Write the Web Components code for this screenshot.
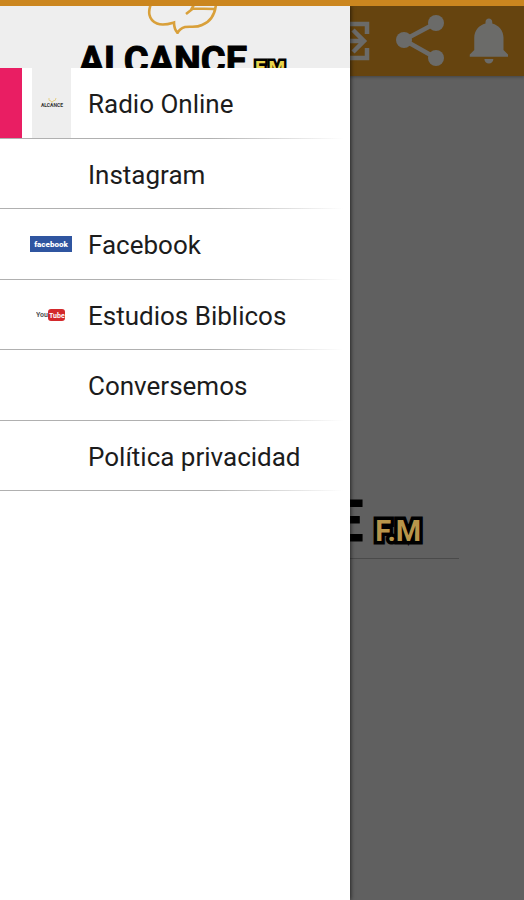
<!DOCTYPE html>
<html lang="es">
<head>
  <meta charset="utf-8">
  <meta name="viewport" content="width=device-width, initial-scale=1">
  <title>Alcance F.M</title>
  <style>
    body {
      margin: 0;
      font-family: Roboto, "Noto Sans", sans-serif;
    }
  </style>
</head>
<body>
  <radio-shell>
    <main-screen slot="screen"></main-screen>
    <side-drawer slot="drawer">
      <drawer-item icon="radio" active>Radio Online</drawer-item>
      <drawer-item>Instagram</drawer-item>
      <drawer-item icon="facebook">Facebook</drawer-item>
      <drawer-item icon="youtube">Estudios Biblicos</drawer-item>
      <drawer-item>Conversemos</drawer-item>
      <drawer-item>Política privacidad</drawer-item>
    </side-drawer>
  </radio-shell>

  <script>
    // Logo: globo de diálogo + nombre de la radio
    class BrandLogo extends HTMLElement {
      constructor() {
        super();
        this.attachShadow({ mode: "open" });
        this.render();
      }
      render() {
        this.shadowRoot.innerHTML = `
          <style>
            :host {
              align-items: center;
              color: #000;
              display: flex;
              flex: none;
              flex-direction: column;
              font-size: 38px;
              font-weight: 700;
              line-height: 54px;
            }
            :host([large]) {
              font-size: 57px;
              line-height: 73px;
            }
            svg {
              display: block;
              fill: none;
              height: 48px;
              stroke: var(--bubble, #d9a03a);
              stroke-width: 2.6;
              width: 72px;
            }
            :host([large]) svg {
              height: 68px;
              width: 102px;
            }
            .name {
              -webkit-text-stroke: 1px #000;
              align-items: baseline;
              display: flex;
              gap: 8px;
            }
            :host([large]) .name {
              gap: 12px;
            }
            .fm {
              -webkit-text-stroke: 5px #000;
              color: var(--gold, #e8d44c);
              font-size: 19px;
              line-height: 24px;
              paint-order: stroke fill;
              stroke-linejoin: round;
            }
            :host([large]) .fm {
              -webkit-text-stroke-width: 7px;
              font-size: 29px;
              line-height: 32px;
            }
          </style>
          <svg viewBox="0 0 72 48" aria-hidden="true">
            <path d="M5 18C2 25 2 34 11 37.500C17 40 23 38 28 36.500C28 41 29 44 31.500 47C33 44 35 42 39 41C45 40 50 42 56 39C64 36 69 29 70 18C70 7 58 2 46 4C30-1 6 4 5 18Z"/>
            <path d="M40 28L47 22.500L69 23M45 24L50 15"/>
          </svg>
          <div class="name"><span>ALCANCE</span><span class="fm">F.M</span></div>
        `;
      }
    }
    customElements.define("brand-logo", BrandLogo);

    // Barra superior con las acciones
    class TopBar extends HTMLElement {
      constructor() {
        super();
        this.attachShadow({ mode: "open" });
        this.render();
      }
      render() {
        this.shadowRoot.innerHTML = `
          <style>
            :host {
              align-items: center;
              background: #66440f;
              box-shadow: 0 1px 3px rgba(0, 0, 0, .3);
              display: flex;
              gap: 12px;
              height: 70px;
              justify-content: flex-end;
              padding-right: 7px;
            }
            button {
              background: none;
              border: 0;
              color: #6b6b69;
              padding: 0;
            }
            svg {
              display: block;
              fill: currentColor;
            }
          </style>
          <button type="button" aria-label="Salir">
            <svg width="52" height="52" viewBox="0 0 52 52">
              <path d="M5 19V9H42V19M5 33V43H42V33M12 26H38M28 15L39 26L28 37" fill="none" stroke="currentColor" stroke-width="4.500"/>
            </svg>
          </button>
          <button type="button" aria-label="Compartir">
            <svg width="62" height="62" viewBox="0 0 62 62">
              <path d="M47 13L15 30L47 48" fill="none" stroke="currentColor" stroke-width="4.500"/>
              <circle cx="15" cy="30" r="8"/>
              <circle cx="47" cy="13" r="8"/>
              <circle cx="47" cy="48" r="8"/>
            </svg>
          </button>
          <button type="button" aria-label="Notificaciones">
            <svg width="54" height="54" viewBox="0 0 24 24">
              <path d="M11.500 22c1.100 0 2-.9 2-2h-4c0 1.100.9 2 2 2zm6.500-6v-5.500c0-3.070-2.130-5.640-5-6.320V3.500c0-.83-.67-1.500-1.500-1.500S10 2.670 10 3.500v.68c-2.870.68-5 3.250-5 6.320V16l-2 2v1h17v-1l-2-2z"/>
            </svg>
          </button>
        `;
      }
    }
    customElements.define("top-bar", TopBar);

    // Pantalla principal, oscurecida mientras el menú está abierto
    class MainScreen extends HTMLElement {
      constructor() {
        super();
        this.attachShadow({ mode: "open" });
        this.render();
      }
      render() {
        this.shadowRoot.innerHTML = `
          <style>
            :host {
              --bubble: #6d521f;
              --gold: #b8954a;
              background: #606060;
              display: flex;
              flex-direction: column;
            }
            main {
              align-items: center;
              display: flex;
              flex: 1;
              flex-direction: column;
              justify-content: center;
            }
            .cover {
              border-bottom: 1px solid #4a4a4a;
              box-sizing: border-box;
              display: flex;
              justify-content: center;
              padding-left: 8px;
              width: 75%;
            }
          </style>
          <top-bar></top-bar>
          <main>
            <div class="cover"><brand-logo large></brand-logo></div>
          </main>
        `;
      }
    }
    customElements.define("main-screen", MainScreen);

    const ICONS = {
      radio: `
        <svg width="39" height="70" viewBox="0 0 39 70">
          <rect width="39" height="70" fill="#eee"/>
          <path d="M17 30q-1 3 2 3l1 1.500 1-1.500q3 0 3-3" fill="none" stroke="#e5cf85"/>
          <text x="20" y="39" text-anchor="middle" font-size="5" font-weight="700" fill="#333">ALCANCE</text>
        </svg>`,
      facebook: `
        <svg width="42" height="16" viewBox="0 0 42 16">
          <rect width="42" height="16" fill="#2f55a0"/>
          <text x="21" y="11" text-anchor="middle" font-size="8" font-weight="900" fill="#fff">facebook</text>
        </svg>`,
      youtube: `
        <svg width="30" height="14" viewBox="0 0 30 14">
          <rect x="12" y="1" width="17" height="12" rx="3" fill="#d3292c"/>
          <text x="0" y="9" font-size="7" font-weight="700" fill="#555">You</text>
          <text x="13" y="10" font-size="7" font-weight="700" fill="#fff">Tube</text>
        </svg>`
    };

    // Opción del menú lateral
    class DrawerItem extends HTMLElement {
      constructor() {
        super();
        this.attachShadow({ mode: "open" });
      }
      connectedCallback() {
        this.render();
      }
      render() {
        const icon = ICONS[this.getAttribute("icon")] || "";
        this.shadowRoot.innerHTML = `
          <style>
            :host {
              display: block;
            }
            a {
              align-items: center;
              box-sizing: border-box;
              color: #1c1c1c;
              display: grid;
              font-size: 26px;
              grid-template-columns: 22px 58px 1fr;
              height: 100%;
              line-height: 32px;
              overflow: hidden;
              position: relative;
              text-decoration: none;
            }
            a::after {
              background: linear-gradient(90deg, #b0b0b0 60%, #fff 98%);
              bottom: 0;
              content: "";
              height: 1px;
              left: 0;
              position: absolute;
              right: 0;
            }
            .mark {
              align-self: stretch;
            }
            :host([active]) .mark {
              background: #e91e63;
            }
            .icon {
              display: flex;
              justify-content: center;
            }
            .label {
              padding: 2px 0 0 8px;
              white-space: nowrap;
            }
          </style>
          <a href="#">
            <span class="mark"></span>
            <span class="icon">${icon}</span>
            <span class="label"><slot></slot></span>
          </a>
        `;
      }
    }
    customElements.define("drawer-item", DrawerItem);

    // Menú lateral
    class SideDrawer extends HTMLElement {
      constructor() {
        super();
        this.attachShadow({ mode: "open" });
        this.render();
      }
      render() {
        this.shadowRoot.innerHTML = `
          <style>
            :host {
              background: #fff;
              box-shadow: 1px 0 4px rgba(0, 0, 0, .6);
              display: block;
            }
            header {
              align-items: center;
              background: #eee;
              display: flex;
              height: 62px;
              justify-content: center;
              overflow: hidden;
              padding-left: 14px;
            }
            nav {
              display: grid;
              grid-auto-rows: 1fr;
              height: 423px;
            }
          </style>
          <header><brand-logo></brand-logo></header>
          <nav aria-label="Menú"><slot></slot></nav>
        `;
      }
    }
    customElements.define("side-drawer", SideDrawer);

    // Barra de estado y las dos capas
    class RadioShell extends HTMLElement {
      constructor() {
        super();
        this.attachShadow({ mode: "open" });
        this.render();
      }
      render() {
        this.shadowRoot.innerHTML = `
          <style>
            :host {
              display: grid;
              grid-template-columns: minmax(0, 350px) minmax(56px, 1fr);
              grid-template-rows: 6px 1fr;
              min-height: 100vh;
            }
            .status {
              background: #cb861f;
              grid-column: 1 / -1;
              z-index: 1;
            }
            ::slotted([slot="screen"]) {
              grid-column: 1 / -1;
              grid-row: 2;
            }
            ::slotted([slot="drawer"]) {
              grid-column: 1;
              grid-row: 2;
            }
          </style>
          <div class="status"></div>
          <slot name="screen"></slot>
          <slot name="drawer"></slot>
        `;
      }
    }
    customElements.define("radio-shell", RadioShell);
  </script>
</body>
</html>
